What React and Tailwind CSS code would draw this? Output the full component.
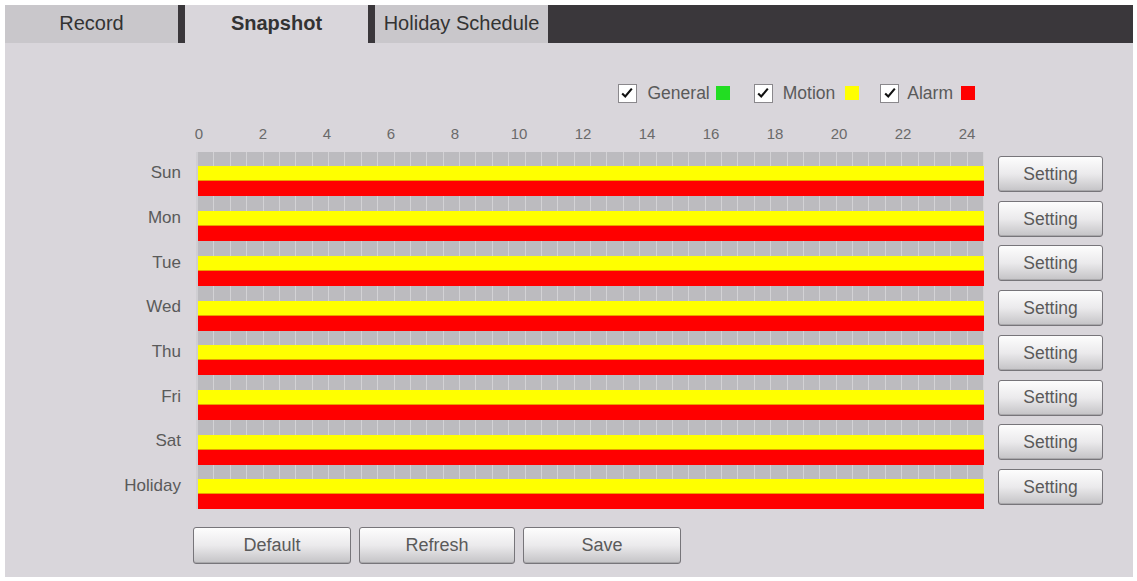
import React from "react";

const days = ["Sun", "Mon", "Tue", "Wed", "Thu", "Fri", "Sat", "Holiday"];
const hours = [0, 2, 4, 6, 8, 10, 12, 14, 16, 18, 20, 22, 24];
const cells = Array.from({ length: 48 }, (_, i) => i);

const Check = () => (
  <span className="flex h-[19px] w-[19px] items-center justify-center border border-[#8a888c] bg-white">
    <svg viewBox="0 0 16 16" className="h-[14px] w-[14px]">
      <path d="M2.5 8.5 L6 12 L13.5 3" fill="none" stroke="#111" strokeWidth="2.4" />
    </svg>
  </span>
);

const GrayButton = ({ children, className }) => (
  <button
    className={
      "rounded-[3px] border border-[#77757a] bg-gradient-to-b from-[#fdfdfd] via-[#ebeaec] to-[#c4c3c6] text-[#5a5a5a] shadow-[inset_0_-1px_0_#a9a8ab] " +
      className
    }
  >
    {children}
  </button>
);

const DayRow = ({ day }) => (
  <div className="flex h-[44.7px] items-center">
    <div className="w-[176px] pb-[2px] text-right text-[17px] text-[#5a5a5a]">{day}</div>
    <div className="ml-[15px] flex h-full w-[788px] flex-col border-l-2 border-[#cfced2]">
      <div className="flex flex-1 bg-[#bcbbbf]">
        {cells.map((c) => (
          <div key={c} className="flex-1 border-r border-[#d3d2d5]" />
        ))}
      </div>
      <div className="h-[15px] border-b border-[#e8a100] bg-[#ffff00]" />
      <div className="h-[15px] bg-[#ff0000]" />
    </div>
    <GrayButton className="ml-[14px] h-[36px] w-[105px] text-[17.5px]">Setting</GrayButton>
  </div>
);

export default function App() {
  return (
    <div
      className="h-[581px] w-[1137px] bg-white p-[5px]"
      style={{ fontFamily: '"Liberation Sans", Arial, sans-serif' }}
    >
      <div className="flex h-[572px] w-[1128px] flex-col bg-[#d9d6db]">
        {/* tabs */}
        <div className="flex h-[38px] bg-[#3a373b]">
          <div className="flex w-[173px] items-center justify-center bg-[#c9c7cb] pb-[3px] text-[20px] text-[#333]">
            Record
          </div>
          <div className="ml-[7px] flex w-[183px] items-center justify-center bg-[#d9d6db] pb-[3px] text-[20px] font-bold text-[#333]">
            Snapshot
          </div>
          <div className="ml-[7px] flex w-[173px] items-center justify-center bg-[#c9c7cb] pb-[3px] text-[20px] text-[#333]">
            Holiday Schedule
          </div>
        </div>

        {/* legend */}
        <div className="mt-[37px] flex items-center justify-end pr-[158px] text-[17.5px] text-[#5a5a5a]">
          <Check />
          <span className="ml-[11px]">General</span>
          <span className="ml-[6px] h-[14px] w-[14px] bg-[#22dd22]" />
          <span className="ml-[24px]"><Check /></span>
          <span className="ml-[10px]">Motion</span>
          <span className="ml-[10px] h-[14px] w-[14px] bg-[#ffff00]" />
          <span className="ml-[21px]"><Check /></span>
          <span className="ml-[8px]">Alarm</span>
          <span className="ml-[8px] h-[14px] w-[14px] bg-[#ff0000]" />
        </div>

        {/* hour labels */}
        <div className="ml-[184px] mt-[17px] flex w-[788px] justify-between text-[15px] text-[#6a6a6a]">
          {hours.map((h) => (
            <span key={h} className="w-[20px] text-center">
              {h}
            </span>
          ))}
        </div>

        {/* schedule */}
        <div className="mt-[6px] flex flex-col">
          {days.map((d) => (
            <DayRow key={d} day={d} />
          ))}
        </div>

        {/* bottom buttons */}
        <div className="ml-[188px] mt-[18px] flex gap-[8px]">
          <GrayButton className="h-[37px] w-[158px] text-[18px]">Default</GrayButton>
          <GrayButton className="h-[37px] w-[156px] text-[18px]">Refresh</GrayButton>
          <GrayButton className="h-[37px] w-[158px] text-[18px]">Save</GrayButton>
        </div>
      </div>
    </div>
  );
}
